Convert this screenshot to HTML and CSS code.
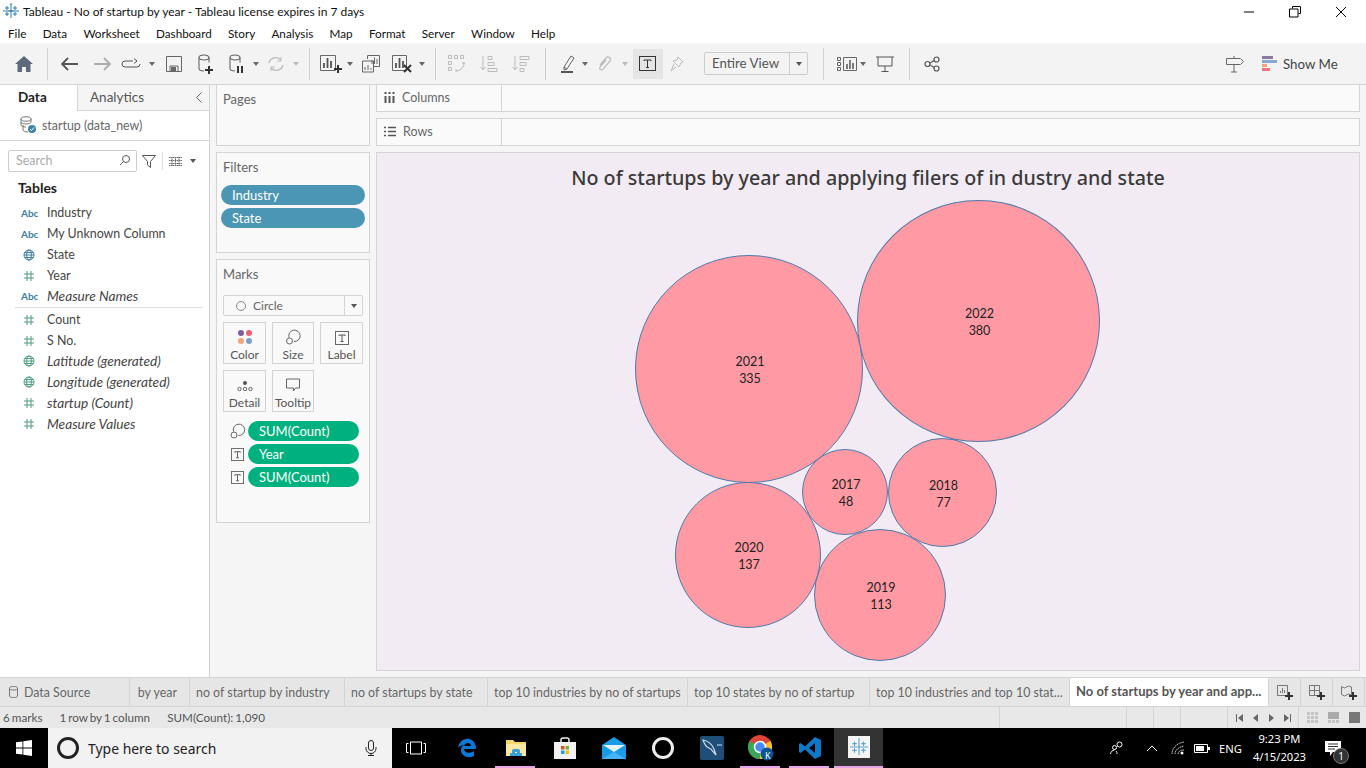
FILE: index.html
```html
<!doctype html>
<html lang="en">
  <head>
    <meta charset="UTF-8" />
    <meta name="viewport" content="width=device-width, initial-scale=1.0" />
    <title>Tableau - No of startup by year</title>
    <link rel="stylesheet" href="styles.css">
  </head>
  <body>
    <!-- shared icons -->
    <svg class="defs" width="0" height="0">
      <symbol id="i-hash" viewBox="0 0 12 12"><path d="M4 1v10M8 1v10M1 4h10M1 8h10" fill="none" stroke="#4f9e80" stroke-width="1"/></symbol>
      <symbol id="i-globe" viewBox="0 0 12 12"><g fill="none" stroke="currentColor" stroke-width="1"><circle cx="6" cy="6" r="5"/><ellipse cx="6" cy="6" rx="2.3" ry="5"/><path d="M1 6h10M1.7 3.500h8.600M1.7 8.500h8.600"/></g></symbol>
      <symbol id="i-size" viewBox="0 0 16 16"><g fill="none" stroke="#666" stroke-width="1"><path d="M4 8.500A5.700 5.700 0 1 1 9 12.500"/><circle cx="4.500" cy="12" r="3"/></g></symbol>
      <symbol id="i-label" viewBox="0 0 14 14"><rect x=".5" y=".5" width="13" height="13" fill="none" stroke="#666"/><path d="M4 5V4h6v1M7 4v6.500M5.500 10.500h3" fill="none" stroke="#555"/></symbol>
      <symbol id="i-cyl" viewBox="0 0 16 20"><g fill="none" stroke="#666" stroke-width="1.100"><ellipse cx="7" cy="3.500" rx="5" ry="2.500"/><path d="M2 3.500v11c0 1.500 2 2.500 5 2.500M12 3.500v5"/></g></symbol>
      <symbol id="i-plus" viewBox="0 0 8 8"><path d="M4 0v8M0 4h8" stroke="#333" stroke-width="2"/></symbol>
      <symbol id="i-tableau" viewBox="0 0 16 16"><path d="M8 1v14M2 8h12M5.500 8h5M4 3v4M2 5h4M12 3v4M10 5h4M4 9v4M2 11h4M12 9v4M10 11h4M8 0v2M0 8h2M14 8h2" fill="none" stroke="currentColor"/></symbol>
    </svg>

    <header class="title-bar">
      <svg class="app-icon" width="16" height="16"><use href="#i-tableau"/></svg>
      <span class="title-text">Tableau - No of startup by year - Tableau license expires in 7 days</span>
      <div class="win-buttons">
        <svg width="12" height="12" viewBox="0 0 12 12"><path d="M1 6h10" stroke="#000"/></svg>
        <svg width="12" height="12" viewBox="0 0 12 12"><path d="M3.500 2.500V.5h8v7h-2M.5 3h8.500v8H.5z" fill="none" stroke="#000"/></svg>
        <svg width="12" height="12" viewBox="0 0 12 12"><path d="M1 1l10 10M11 1L1 11" stroke="#000"/></svg>
      </div>
    </header>

    <nav class="menu-bar">
      <span>File</span><span>Data</span><span>Worksheet</span><span>Dashboard</span><span>Story</span><span>Analysis</span><span>Map</span><span>Format</span><span>Server</span><span>Window</span><span>Help</span>
    </nav>

    <div class="toolbar">
      <svg width="18" height="16" viewBox="0 0 18 16"><path d="M9 0L0 8h2.500v8H7v-5h4v5h4.500V8H18z" fill="#5b6b7c"/></svg>
      <i class="tb-sep"></i>
      <svg width="18" height="14" viewBox="0 0 18 14"><path d="M7 1L1 7l6 6M1 7h16" fill="none" stroke="#555" stroke-width="1.800"/></svg>
      <svg width="18" height="14" viewBox="0 0 18 14"><path d="M11 1l6 6-6 6M17 7H1" fill="none" stroke="#aaa" stroke-width="1.800"/></svg>
      <svg width="20" height="12" viewBox="0 0 20 12"><path d="M12 3H4a3 3 0 0 0 0 6h12a3 3 0 0 0 3-3M13 .5L16 3l-3 2.500" fill="none" stroke="#555"/></svg>
      <i class="caret"></i>
      <svg width="16" height="16" viewBox="0 0 16 16"><path d="M.5.5h15v15H.5zM4 15.500V10h8v5.500" fill="none" stroke="#666"/><path d="M5 11h5v4H5z" fill="#666"/></svg>
      <svg width="16" height="20" viewBox="0 0 16 20"><use href="#i-cyl"/><use href="#i-plus" x="8" y="12" width="8" height="8"/></svg>
      <svg width="16" height="20" viewBox="0 0 16 20"><use href="#i-cyl"/><path d="M10 12v7M14 12v7" stroke="#333" stroke-width="2"/></svg>
      <i class="caret"></i>
      <svg width="18" height="16" viewBox="0 0 18 16"><path d="M2 7a7 7 0 0 1 12-3M16 9a7 7 0 0 1-12 3" fill="none" stroke="#bbb" stroke-width="1.400"/><path d="M14 1v4h-4M4 15v-4h4" fill="none" stroke="#bbb"/></svg>
      <i class="caret caret-off"></i>
      <i class="tb-sep"></i>
      <svg width="22" height="18" viewBox="0 0 22 18"><path d="M.5.5h15v15H.5z" fill="none" stroke="#666"/><path d="M4 13V8M7.500 13V3M11 13V6" stroke="#555" stroke-width="1.800"/><use href="#i-plus" x="14" y="10" width="8" height="8"/></svg>
      <i class="caret"></i>
      <svg width="18" height="18" viewBox="0 0 18 18"><path d="M5.500 4V.5h12v11H12M.5 6h11v11H.5z" fill="#f3f3f3" stroke="#666"/><path d="M10 9V5M12.500 9V2.500M15 9V4M3 15v-3M6 15v-5M9 15v-2" stroke="#666"/></svg>
      <svg width="20" height="18" viewBox="0 0 20 18"><path d="M.5.5h14v15H.5z" fill="none" stroke="#666"/><path d="M4 13V8M7.500 13V3M11 13V6" stroke="#555" stroke-width="1.800"/><path d="M12 10l7 7M19 10l-7 7" stroke="#333" stroke-width="2"/></svg>
      <i class="caret"></i>
      <i class="tb-sep"></i>
      <svg width="18" height="18" viewBox="0 0 18 18"><g fill="none" stroke="#bbb"><path d="M.5.5h3v3h-3zM6.500.5h3v3h-3zM12.500.5h3v3h-3zM.5 6.500h3v3h-3zM.5 12.500h3v3h-3z"/><path d="M16 7a8 8 0 0 1-8 9M8 14l0 3M14 8l3 0"/></g></svg>
      <svg width="18" height="16" viewBox="0 0 18 16"><path d="M3 0v14M.5 11L3 14l2.500-3" fill="none" stroke="#bbb"/><path d="M8 .5h4v3H8zM8 6.500h6v3H8zM8 12.500h9v3H8z" fill="none" stroke="#bbb"/></svg>
      <svg width="18" height="16" viewBox="0 0 18 16"><path d="M3 0v14M.5 11L3 14l2.500-3" fill="none" stroke="#bbb"/><path d="M8 .5h9v3H8zM8 6.500h6v3H8zM8 12.500h4v3H8z" fill="none" stroke="#bbb"/></svg>
      <i class="tb-sep"></i>
      <svg width="14" height="18" viewBox="0 0 14 18"><path d="M3 12L10 1l3 2-7 11-3 1zM3 12l3 2" fill="none" stroke="#666"/><path d="M0 17h12" stroke="#555" stroke-width="2"/></svg>
      <i class="caret"></i>
      <svg width="14" height="16" viewBox="0 0 14 16"><path d="M2 9l6-7a2.500 2.500 0 0 1 4 3l-7 8a1.500 1.500 0 0 1-3-2l6-7" fill="none" stroke="#bbb" stroke-width="1.200"/></svg>
      <i class="caret caret-off"></i>
      <div class="tb-active"><svg width="18" height="16" viewBox="0 0 18 16"><rect x=".5" y=".5" width="16" height="14" fill="none" stroke="#333"/><path d="M5 5V4h7v1M8.500 4v7.500M7 11.500h3" fill="none" stroke="#333"/></svg></div>
      <svg width="14" height="16" viewBox="0 0 14 16"><path d="M8 1l5 5-2 1-2 4-6-6 4-1zM4 8l-3 7 5-4" fill="none" stroke="#bbb"/></svg>
      <div class="fit-select"><span class="fit-text">Entire View</span><span class="fit-arrow"><i class="caret caret-dark"></i></span></div>
      <i class="tb-sep"></i>
      <svg width="20" height="14" viewBox="0 0 20 14"><path d="M.5.5h3v3h-3zM.5 5.500h3v3h-3zM.5 10.500h3v3h-3zM6.500.5h13v13h-13z" fill="none" stroke="#666"/><path d="M10 12V7M13 12V3M16 12V6" stroke="#555" stroke-width="1.500"/></svg>
      <i class="caret"></i>
      <svg width="18" height="16" viewBox="0 0 18 16"><path d="M0 1h18M2 1v9h14V1M9 10v5M5.500 15.500h7" fill="none" stroke="#555"/></svg>
      <i class="tb-sep"></i>
      <svg width="16" height="16" viewBox="0 0 16 16"><g fill="none" stroke="#555" stroke-width="1.200"><circle cx="3.500" cy="8" r="2.500"/><circle cx="12.500" cy="3.500" r="2.500"/><circle cx="12.500" cy="12.500" r="2.500"/><path d="M5.800 7l4.500-2.500M5.800 9l4.500 2.500"/></g></svg>
      <div class="tb-fill"></div>
      <svg width="18" height="18" viewBox="0 0 18 18"><path d="M.5 3.500h14l3 3-3 3H.5zM8 3.500V1M8 9.500V17M5 17h6" fill="none" stroke="#666"/></svg>
      <div class="show-me">
        <svg width="15" height="15" viewBox="0 0 15 15"><path d="M0 0h11v3H0z" fill="#8a7a9e"/><path d="M0 4h15v3H0z" fill="#86a9cf"/><path d="M0 8h5v3H0z" fill="#f3a37a"/><path d="M0 12h8v3H0z" fill="#f0727e"/></svg>
        <span>Show Me</span>
      </div>
    </div>

    <main class="workspace">
      <aside class="data-pane">
        <div class="pane-tabs">
          <div class="pane-tab pane-tab-on">Data</div>
          <div class="pane-tab">Analytics
            <svg class="collapse" width="6" height="11" viewBox="0 0 6 11"><path d="M5.500.5l-5 5 5 5" fill="none" stroke="#666"/></svg>
          </div>
        </div>
        <div class="source-row">
          <svg width="18" height="18" viewBox="0 0 18 18"><g fill="none" stroke="#777"><ellipse cx="7" cy="3" rx="5" ry="2.200"/><path d="M2 3v3c0 1 2 2 5 2s5-1 5-2V3M2 6v3c0 1 2 2 5 2M4 9v5c0 1 2 2 5 2"/></g><circle cx="13" cy="13" r="4" fill="#3b86ad"/><path d="M11 13l1.500 1.500 2.500-3" fill="none" stroke="#fff"/></svg>
          <span>startup (data_new)</span>
        </div>
        <div class="search-row">
          <div class="search-box">
            <span>Search</span>
            <svg width="12" height="12" viewBox="0 0 12 12"><circle cx="7" cy="5" r="3.500" fill="none" stroke="#555"/><path d="M4.500 7.500L1 11" stroke="#555"/></svg>
          </div>
          <svg class="filter-icon" width="14" height="13" viewBox="0 0 14 13"><path d="M.5.5h13L8.500 6.500V12.500L5.500 10V6.500z" fill="none" stroke="#555"/></svg>
          <i class="search-sep"></i>
          <svg width="13" height="9" viewBox="0 0 13 9"><path d="M0 .5h13M0 3.500h13M0 6.500h13M0 8.500h13M3 0v9M6.500 0v9M10 0v9" stroke="#666" stroke-dasharray="1.500 .5"/></svg>
          <i class="caret caret-dark"></i>
        </div>
        <h3 class="tables-head">Tables</h3>
        <ul class="fields">
          <li><b class="abc">Abc</b>Industry</li>
          <li><b class="abc">Abc</b>My Unknown Column</li>
          <li><svg class="globe-blue" width="12" height="12"><use href="#i-globe"/></svg>State</li>
          <li><svg width="12" height="12"><use href="#i-hash"/></svg>Year</li>
          <li class="calc"><b class="abc">Abc</b>Measure Names</li>
        </ul>
        <ul class="fields fields-measures">
          <li><svg width="12" height="12"><use href="#i-hash"/></svg>Count</li>
          <li><svg width="12" height="12"><use href="#i-hash"/></svg>S No.</li>
          <li class="calc"><svg class="globe-green" width="12" height="12"><use href="#i-globe"/></svg>Latitude (generated)</li>
          <li class="calc"><svg class="globe-green" width="12" height="12"><use href="#i-globe"/></svg>Longitude (generated)</li>
          <li class="calc"><svg width="12" height="12"><use href="#i-hash"/></svg>startup (Count)</li>
          <li class="calc"><svg width="12" height="12"><use href="#i-hash"/></svg>Measure Values</li>
        </ul>
      </aside>

      <section class="cards">
        <div class="card card-pages"><div class="card-head">Pages</div></div>
        <div class="card card-filters">
          <div class="card-head">Filters</div>
          <div class="pill pill-blue">Industry</div>
          <div class="pill pill-blue">State</div>
        </div>
        <div class="card card-marks">
          <div class="card-head">Marks</div>
          <div class="mark-type">
            <span class="mark-type-name"><i class="ring"></i>Circle</span>
            <span class="mark-type-arrow"><i class="caret caret-dark"></i></span>
          </div>
          <div class="mark-grid">
            <div class="mark-btn">
              <svg width="16" height="16" viewBox="0 0 16 16"><circle cx="4" cy="4" r="3" fill="#7d5f93"/><circle cx="12" cy="4" r="3" fill="#ef5f78"/><circle cx="4" cy="12" r="3" fill="#f3a37a"/><circle cx="12" cy="12" r="3" fill="#7d9fce"/></svg>
              <span>Color</span>
            </div>
            <div class="mark-btn"><svg width="16" height="16"><use href="#i-size"/></svg><span>Size</span></div>
            <div class="mark-btn"><svg width="14" height="14"><use href="#i-label"/></svg><span>Label</span></div>
            <div class="mark-btn">
              <svg width="16" height="16" viewBox="0 0 16 16"><circle cx="8" cy="6" r="2" fill="#555"/><g fill="none" stroke="#666"><circle cx="2.500" cy="12" r="1.700"/><circle cx="8" cy="12" r="1.700"/><circle cx="13.500" cy="12" r="1.700"/></g></svg>
              <span>Detail</span>
            </div>
            <div class="mark-btn">
              <svg width="16" height="16" viewBox="0 0 16 16"><path d="M1.500 2h13v9h-4l-2 3v-3h-7z" fill="none" stroke="#666"/></svg>
              <span>Tooltip</span>
            </div>
          </div>
          <div class="enc-row"><svg width="16" height="16"><use href="#i-size"/></svg><div class="pill pill-green">SUM(Count)</div></div>
          <div class="enc-row"><svg width="13" height="13"><use href="#i-label"/></svg><div class="pill pill-green">Year</div></div>
          <div class="enc-row"><svg width="13" height="13"><use href="#i-label"/></svg><div class="pill pill-green">SUM(Count)</div></div>
        </div>
      </section>

      <section class="viz-side">
        <div class="shelf">
          <div class="shelf-label">
            <svg width="11" height="11" viewBox="0 0 11 11"><path d="M1.500 0v2M5.500 0v2M9.500 0v2M1.500 4v7M5.500 4v7M9.500 4v7" stroke="#555" stroke-width="2"/></svg>
            Columns
          </div>
        </div>
        <div class="shelf">
          <div class="shelf-label">
            <svg width="12" height="11" viewBox="0 0 12 11"><path d="M0 1.500h2M4 1.500h8M0 5.500h2M4 5.500h8M0 9.500h2M4 9.500h8" stroke="#555" stroke-width="1.600"/></svg>
            Rows
          </div>
        </div>
        <div class="viz">
          <h2 class="viz-title">No of startups by year and applying filers of in dustry and state</h2>
          <!-- bubble positions are the chart data -->
          <div class="bubble b-2022"><span>2022</span><span>380</span></div>
          <div class="bubble b-2021"><span>2021</span><span>335</span></div>
          <div class="bubble b-2020"><span>2020</span><span>137</span></div>
          <div class="bubble b-2019"><span>2019</span><span>113</span></div>
          <div class="bubble b-2018"><span>2018</span><span>77</span></div>
          <div class="bubble b-2017"><span>2017</span><span>48</span></div>
        </div>
      </section>
    </main>

    <div class="tab-bar">
      <div class="tab tab-source">
        <svg width="9" height="12" viewBox="0 0 9 12"><path d="M.5 2v8c0 1 1 1.500 4 1.500s4-.5 4-1.500V2c0-1-1-1.500-4-1.500S.5 1 .5 2zM.5 2.500c0 1 1.500 1.500 4 1.500s4-.5 4-1.500" fill="none" stroke="#777"/></svg>
        Data Source
      </div>
      <div class="tab tab-cut">by year</div>
      <div class="tab tab-a">no of startup by industry</div>
      <div class="tab tab-b">no of startups by state</div>
      <div class="tab tab-c">top 10 industries by no of startups</div>
      <div class="tab tab-d">top 10 states by no of startup</div>
      <div class="tab tab-e">top 10 industries and top 10 stat...</div>
      <div class="tab tab-on">No of startups by year and app...</div>
      <div class="tab tab-add">
        <svg width="16" height="15" viewBox="0 0 16 15"><path d="M.5.5h10v10H.5z" fill="none" stroke="#777"/><path d="M3.500 8V6M5.500 8V3M7.500 8V5" stroke="#777"/><use href="#i-plus" x="8" y="7" width="8" height="8"/></svg>
      </div>
      <div class="tab tab-add">
        <svg width="16" height="15" viewBox="0 0 16 15"><path d="M.5.500h10v10H.5zM.5 5.500h10M5.500.5v10" fill="none" stroke="#777"/><use href="#i-plus" x="8" y="7" width="8" height="8"/></svg>
      </div>
      <div class="tab tab-add">
        <svg width="16" height="15" viewBox="0 0 16 15"><path d="M.5 1.500l3 1.500 4-2 3 1v8l-3-1-4 2-3-1.500z" fill="none" stroke="#777"/><use href="#i-plus" x="8" y="7" width="8" height="8"/></svg>
      </div>
    </div>

    <footer class="status-bar">
      <div class="status-info"><span>6 marks</span><span>1 row by 1 column</span><span>SUM(Count): 1,090</span></div>
      <div class="status-cell status-w1"></div>
      <div class="status-cell status-w2"></div>
      <div class="status-cell status-w2"></div>
      <div class="status-cell status-w3"></div>
      <div class="status-cell status-nav">
        <svg width="55" height="8" viewBox="0 0 55 8"><path d="M.5 0v8M54.500 0v8" stroke="#666"/><path d="M7 0L2 4l5 4zM22 0l-5 4 5 4zM33 0l5 4-5 4zM48 0l5 4-5 4z" fill="#666"/></svg>
      </div>
      <div class="status-views">
        <svg width="11" height="11" viewBox="0 0 11 11"><path d="M0 0h3v3H0zM4 0h3v3H4zM8 0h3v3H8zM0 4h3v3H0zM4 4h3v3H4zM8 4h3v3H8zM0 8h3v3H0zM4 8h3v3H4zM8 8h3v3H8z" fill="#c4c4c4"/></svg>
        <svg width="11" height="11" viewBox="0 0 11 11"><path d="M0 0h11v7H0z" fill="#aaa"/><path d="M0 8h3v3H0zM4 8h3v3H4zM8 8h3v3H8z" fill="#c4c4c4"/></svg>
        <svg width="11" height="11" viewBox="0 0 11 11"><path d="M0 0h11v11H0z" fill="#777"/></svg>
      </div>
    </footer>

    <div class="taskbar">
      <div class="start">
        <svg width="16" height="16" viewBox="0 0 16 16"><path d="M0 2.300l6.500-.9v6.200H0zM7.300 1.300L16 0v7.600H7.300zM0 8.400h6.500v6.200L0 13.700zM7.300 8.400H16V16l-8.700-1.300z" fill="#fff"/></svg>
      </div>
      <div class="task-search">
        <i class="cortana"></i>
        <span>Type here to search</span>
        <svg class="mic" width="12" height="16" viewBox="0 0 12 16"><rect x="3.500" y=".5" width="5" height="10" rx="2.500" fill="none" stroke="#222"/><path d="M1 7v1.500a5 5 0 0 0 10 0V7M6 13.500V15.500M3 15.500h6" fill="none" stroke="#222"/></svg>
      </div>
      <div class="task-app task-view">
        <svg width="20" height="14" viewBox="0 0 20 14"><path d="M4.500 1h11v12h-11zM2.500 2.500H.5v9h2M17.500 2.500h2v9h-2" fill="none" stroke="#fff"/></svg>
      </div>
      <div class="task-app">
        <svg width="20" height="20" viewBox="0 0 20 20"><path d="M1 10C2 3 8 0 12 1c5 1 7 5 7 10H7c0 4 6 5 10 2v5c-6 3-13 0-13-6 0-2 1-4 3-5-2 0-5 1-6 3zM7 8h7c0-4-6-4-7 0z" fill="#0a78d7"/></svg>
      </div>
      <div class="task-app task-open">
        <svg width="22" height="18" viewBox="0 0 22 18"><path d="M1 1h7l2 2h11v14H1z" fill="#f5d76e"/><path d="M1 5h20v12H1z" fill="#fbe9a5"/><path d="M7 17v-5a2 2 0 0 1 2-2h4a2 2 0 0 1 2 2v5h-3v-4h-2v4z" fill="#3aa0d8"/><path d="M5 14h12v3H5z" fill="#3aa0d8"/></svg>
      </div>
      <div class="task-app">
        <svg width="22" height="22" viewBox="0 0 22 22"><path d="M7 6V3a2 2 0 0 1 2-2h4a2 2 0 0 1 2 2v3" fill="none" stroke="#eee" stroke-width="1.500"/><path d="M0 5h22v17H0z" fill="#f2f2f2"/><path d="M7 9h3.500v3.500H7z" fill="#e84c2b"/><path d="M11.500 9H15v3.500h-3.500z" fill="#6fb52c"/><path d="M7 13.500h3.500V17H7z" fill="#1ba1e2"/><path d="M11.500 13.500H15V17h-3.500z" fill="#fbb900"/></svg>
      </div>
      <div class="task-app">
        <svg width="24" height="22" viewBox="0 0 24 22"><path d="M0 8L12 0l12 8v14H0z" fill="#1a9be8"/><path d="M1 8h22l-11 7z" fill="#e8f4fc"/><path d="M0 22l12-7 12 7z" fill="#45b4f2"/></svg>
      </div>
      <div class="task-app"><i class="obs-ring"></i></div>
      <div class="task-app">
        <svg width="24" height="24" viewBox="0 0 24 24"><rect width="24" height="24" rx="2" fill="#1f4f78"/><path d="M3 4c5 1 9 4 11 9l2 6c-3-3-4-6-7-7-3-1-5-5-6-8zM17 9h5" fill="none" stroke="#cfdde8" stroke-width="1.200"/></svg>
      </div>
      <div class="task-app task-open">
        <svg width="26" height="26" viewBox="0 0 26 26"><circle cx="12" cy="12" r="12" fill="#de4437"/><path d="M12 12L22.400 6A12 12 0 0 1 12 24z" fill="#fbc02d"/><path d="M12 12L12 24A12 12 0 0 1 1.600 6z" fill="#3aa657"/><circle cx="12" cy="12" r="5.500" fill="#4a8af4" stroke="#fff" stroke-width="1.500"/><circle cx="19" cy="19" r="6.500" fill="#0b5394"/></svg>
        <b class="profile-k">K</b>
      </div>
      <div class="task-app task-open">
        <svg width="24" height="24" viewBox="0 0 24 24"><path d="M17 1l6 3v16l-6 3L7 13.500 2.500 17 1 16v-8l1.500-1L7 10.500zM17 7l-6 5 6 5z" fill="#0e79c9"/></svg>
      </div>
      <div class="task-app task-current">
        <div class="tableau-tile"><svg width="18" height="18"><use href="#i-tableau"/></svg></div>
      </div>
      <div class="tray">
        <svg class="tray-people" width="14" height="14" viewBox="0 0 14 14"><g fill="none" stroke="#fff"><circle cx="9.500" cy="3.500" r="2.500"/><circle cx="4.500" cy="6.500" r="2"/><path d="M.5 13c0-2 2-4 4-4M7 13c0-1 0-2-1-3"/></g></svg>
        <svg class="tray-up" width="12" height="7" viewBox="0 0 12 7"><path d="M1 6l5-5 5 5" fill="none" stroke="#fff"/></svg>
        <svg class="tray-wifi" width="14" height="14" viewBox="0 0 14 14"><path d="M1 13C1 7 6 2 13 1M4 13c0-4 4-7 9-8M7 13c0-2 2-4 6-4" fill="none" stroke="#ccc" stroke-dasharray="1.500 .6"/><circle cx="11" cy="12" r="1.500" fill="#fff"/></svg>
        <svg class="tray-bat" width="16" height="9" viewBox="0 0 16 9"><path d="M.5.5h13v8H.5z" fill="none" stroke="#fff"/><path d="M2 2h8v5H2zM14 3h2v3h-2z" fill="#fff"/></svg>
        <span class="tray-lang">ENG</span>
        <div class="tray-clock"><span>9:23 PM</span><span>4/15/2023</span></div>
        <div class="tray-note">
          <svg width="16" height="15" viewBox="0 0 16 15"><path d="M0 0h16v11H8l-3 4v-4H0z" fill="#fff"/><path d="M3 3h10M3 5.500h10M3 8h7" stroke="#333"/></svg>
          <b class="note-count">1</b>
        </div>
      </div>
    </div>
  </body>
</html>
```

FILE: styles.css
```css
* {
  box-sizing: border-box;
}
html,
body {
  margin: 0;
  height: 768px;
  overflow: hidden;
}
body {
  display: flex;
  flex-direction: column;
  font-family: "Lato", "Liberation Sans", sans-serif;
  font-size: 12.400px;
  color: #444;
  background: #f5f5f5;
}
.defs {
  position: absolute;
}
svg {
  display: block;
  flex: none;
}
ul {
  list-style: none;
  margin: 0;
  padding: 0;
}

/* window chrome */
.title-bar {
  height: 22px;
  flex: none;
  display: flex;
  align-items: center;
  padding-left: 3px;
  background: #fff;
  font-size: 12px;
  color: #111;
}
.app-icon {
  color: #2f7fa8;
}
.title-text {
  margin-left: 4px;
}
.win-buttons {
  margin-left: auto;
  display: flex;
  gap: 34px;
  padding-right: 19px;
  margin-top: 2px;
}
.menu-bar {
  height: 21px;
  flex: none;
  display: flex;
  gap: 16.300px;
  padding: 0 0 0 8px;
  align-items: center;
  background: #fff;
  font-size: 11.700px;
  color: #111;
}

/* toolbar: one grid column per button, tuned to the app spacing */
.toolbar {
  height: 41px;
  flex: none;
  display: grid;
  grid-template-columns: 30px 16px 30px 34px 24px 18px 26px 36px 26px 14px 26px 14px 12px 32px 6px 36px 26px 14px 12px 32px 32px 32px 16px 30px 4px 36px 4px 42px 16px 123px 30px 18px 14px 30px 18px 28px 1fr 30px 116px;
  justify-items: center;
  align-items: center;
  padding-left: 9px;
  background: #f3f3f3;
}
.tb-sep {
  width: 1px;
  height: 32px;
  background: #cfcfcf;
}
.tb-fill {
  height: 1px;
}
.caret {
  display: block;
  flex: none;
  width: 0;
  height: 0;
  border-left: 3.500px solid transparent;
  border-right: 3.500px solid transparent;
  border-top: 4px solid #666;
}
.caret-off {
  border-top-color: #bbb;
}
.caret-dark {
  border-top-color: #555;
}
.tb-active {
  width: 30px;
  height: 30px;
  display: flex;
  align-items: center;
  justify-content: center;
  background: #e4e4e4;
}
.fit-select {
  justify-self: end;
  width: 104px;
  height: 23px;
  display: flex;
  border: 1px solid #ccc;
  border-radius: 2px;
  color: #555;
  font-size: 13.300px;
}
.fit-text {
  flex: 1;
  padding-left: 7px;
  line-height: 20px;
}
.fit-arrow {
  width: 18px;
  border-left: 1px solid #ccc;
  display: flex;
  align-items: center;
  justify-content: center;
}
.show-me {
  justify-self: start;
  display: flex;
  align-items: center;
  gap: 6px;
  padding-left: 12px;
  font-size: 13.300px;
  color: #444;
}

/* main area */
.workspace {
  height: 593px;
  flex: none;
  display: grid;
  grid-template-columns: 210px 154px 984px;
  column-gap: 6px;
  border-top: 1px solid #d4d4d4;
}

/* data pane */
.data-pane {
  background: #fff;
  border-right: 1px solid #d4d4d4;
}
.pane-tabs {
  display: flex;
  height: 26px;
}
.pane-tab {
  position: relative;
  flex: 1;
  padding-left: 12px;
  line-height: 24px;
  font-size: 13.500px;
  background: #f5f5f5;
  border-bottom: 1px solid #d4d4d4;
  color: #555;
}
.pane-tab-on {
  flex: none;
  width: 78px;
  padding-left: 18px;
  background: #fff;
  border-bottom: 0;
  border-right: 1px solid #d4d4d4;
  font-weight: 700;
  color: #222;
}
.collapse {
  position: absolute;
  right: 7px;
  top: 7px;
}
.source-row {
  height: 30px;
  display: flex;
  align-items: center;
  gap: 5px;
  padding: 0 0 1px 19px;
  border-bottom: 1px solid #d4d4d4;
  color: #666;
}
.search-row {
  display: flex;
  align-items: center;
  margin-top: 9px;
  padding-left: 8px;
}
.search-box {
  width: 129px;
  height: 22px;
  display: flex;
  align-items: center;
  justify-content: space-between;
  padding: 0 5px 2px 7px;
  border: 1px solid #ccc;
  border-radius: 2px;
  color: #aaa;
}
.filter-icon {
  margin-left: 5px;
}
.search-sep {
  width: 1px;
  height: 18px;
  margin: 0 6px;
  background: #ddd;
}
.search-row .caret {
  margin-left: 8px;
}
.tables-head {
  margin: 7px 0 0 18px;
  font-size: 14px;
  line-height: 18px;
  font-weight: 700;
  color: #222;
}
.fields {
  margin-top: 5px;
  padding: 0 6px 0 15px;
}
.fields-measures {
  margin-top: 0;
  padding-top: 1px;
}
.fields li {
  height: 21px;
  display: flex;
  align-items: center;
  color: #444;
}
.fields:not(.fields-measures)::after {
  content: "";
  display: block;
  height: 1px;
  background: #ddd;
}
.fields li > svg {
  margin: 0 12px 0 8px;
}
.fields .calc {
  padding-bottom: 2px;
  font-style: italic;
  font-size: 13.700px;
}
.abc {
  width: 32px;
  padding-left: 6px;
  font-size: 10px;
  font-style: normal;
  font-weight: 700;
  color: #3f7d9e;
}
.globe-blue {
  color: #3f7d9e;
}
.globe-green {
  color: #4f9e80;
}

/* shelves and cards */
.cards {
  display: flex;
  flex-direction: column;
  gap: 6px;
  margin-top: -1px;
}
.card {
  padding: 0 6px;
  background: #f9f9f9;
  border: 1px solid #d4d4d4;
}
.card-head {
  padding-top: 6px;
  line-height: 16px;
  font-size: 13px;
  color: #666;
}
.card-pages {
  height: 62px;
}
.card-filters {
  height: 101px;
}
.card-marks {
  height: 264px;
}
.pill {
  height: 20px;
  border-radius: 10px;
  padding-left: 11px;
  line-height: 21px;
  font-size: 13px;
  color: #fff;
}
.pill-blue {
  margin: 3px -2px 0 -2px;
  background: #4a96b4;
}
.card-filters .card-head {
  margin-bottom: 10px;
}
.pill-green {
  flex: 1;
  background: #00b180;
}
.mark-type {
  display: flex;
  height: 21px;
  margin-top: 13px;
  border: 1px solid #d4d4d4;
  border-radius: 2px;
  font-size: 12px;
  color: #666;
}
.mark-type-name {
  flex: 1;
  display: flex;
  align-items: center;
  gap: 7px;
  padding-left: 12px;
}
.ring {
  width: 10px;
  height: 10px;
  border: 1px solid #888;
  border-radius: 50%;
}
.mark-type-arrow {
  width: 18px;
  display: flex;
  align-items: center;
  justify-content: center;
  border-left: 1px solid #d4d4d4;
}
.mark-grid {
  display: grid;
  grid-template-columns: 43px 42px 43px;
  grid-auto-rows: 42px;
  column-gap: 6px;
  row-gap: 6px;
  margin: 6px 0 9px;
}
.mark-btn {
  display: flex;
  flex-direction: column;
  align-items: center;
  justify-content: flex-end;
  gap: 2px;
  padding-bottom: 1px;
  border: 1px solid #d4d4d4;
  font-size: 12px;
  color: #555;
}
.enc-row {
  display: flex;
  align-items: center;
  height: 20px;
  margin: 0 4px 3px 0;
}
.enc-row > svg {
  margin-left: 6px;
  width: 17px;
}
.enc-row > svg + .pill {
  margin-left: 2px;
}

/* view */
.viz-side {
  display: flex;
  flex-direction: column;
  gap: 6px;
  margin-top: -1px;
}
.shelf {
  height: 28px;
  flex: none;
  background: #fafafa;
  border: 1px solid #d4d4d4;
}
.shelf-label {
  width: 125px;
  height: 100%;
  display: flex;
  align-items: center;
  gap: 7px;
  padding: 0 0 2px 7px;
  border-right: 1px solid #d4d4d4;
  color: #666;
  font-size: 12.500px;
}
.viz {
  position: relative;
  height: 519px;
  background: #f2ebf3;
  border: 1px solid #d4d4d4;
}
.viz-title {
  margin: 13px 0 0;
  text-align: center;
  font-family: "Noto Sans", sans-serif;
  font-size: 19.700px;
  line-height: 24px;
  font-weight: 500;
  color: #3a3a3a;
}
.bubble {
  position: absolute;
  display: flex;
  flex-direction: column;
  align-items: center;
  justify-content: center;
  padding: 2px 0 0 2px;
  border-radius: 50%;
  background: #ff9aa4;
  border: 1px solid #4f79ab;
  font-size: 12.500px;
  line-height: 17px;
  color: #222;
}
.b-2022 {
  left: 480px;
  top: 47px;
  width: 243px;
  height: 242px;
}
.b-2021 {
  left: 258px;
  top: 102px;
  width: 228px;
  height: 228px;
}
.b-2020 {
  left: 298px;
  top: 329px;
  width: 146px;
  height: 146px;
}
.b-2019 {
  left: 437px;
  top: 376px;
  width: 132px;
  height: 132px;
}
.b-2018 {
  left: 511px;
  top: 285px;
  width: 109px;
  height: 109px;
}
.b-2017 {
  left: 425px;
  top: 296px;
  width: 86px;
  height: 86px;
}

/* sheet tabs */
.tab-bar {
  height: 30px;
  flex: none;
  display: flex;
  background: #e6e6e6;
  border-top: 1px solid #d4d4d4;
  border-bottom: 1px solid #d4d4d4;
}
.tab {
  flex: none;
  height: 28px;
  display: flex;
  align-items: center;
  padding-left: 6px;
  border-right: 1px solid #d4d4d4;
  color: #666;
  white-space: nowrap;
  overflow: hidden;
}
.tab-source {
  width: 130px;
  gap: 6px;
  padding-left: 9px;
}
.tab-cut {
  width: 60px;
  justify-content: flex-end;
  padding: 0 12px 0 0;
}
.tab-a {
  width: 155px;
}
.tab-b {
  width: 143px;
}
.tab-c {
  width: 200px;
}
.tab-d {
  width: 182px;
}
.tab-e {
  width: 200px;
}
.tab-on {
  width: 199px;
  padding-bottom: 2px;
  background: #fff;
  font-size: 13px;
  font-weight: 700;
  color: #555;
}
.tab-add {
  width: 32px;
  justify-content: center;
  padding: 0;
}

/* status bar */
.status-bar {
  height: 21px;
  flex: none;
  display: flex;
  background: #e8e8e8;
  font-size: 11.700px;
  word-spacing: -1px;
  color: #555;
}
.status-info {
  width: 1000px;
  display: flex;
  align-items: center;
  gap: 17px;
  padding: 0 0 2px 3px;
  border-right: 1px solid #d4d4d4;
}
.status-cell {
  border-right: 1px solid #d4d4d4;
}
.status-w1 {
  width: 127px;
}
.status-w2 {
  width: 27px;
}
.status-w3 {
  width: 47px;
}
.status-nav {
  width: 71px;
  display: flex;
  align-items: center;
  padding-left: 8px;
}
.status-views {
  display: flex;
  align-items: center;
  gap: 10px;
  padding-left: 8px;
}

/* windows taskbar */
.taskbar {
  height: 40px;
  flex: none;
  display: flex;
  background: #000;
  color: #fff;
  font-family: "Noto Sans", sans-serif;
}
.start {
  width: 48px;
  display: flex;
  align-items: center;
  justify-content: center;
}
.task-search {
  width: 344px;
  display: flex;
  align-items: center;
  padding-left: 9px;
  background: #f2f2f2;
  color: #222;
  font-size: 13.950px;
}
.cortana {
  width: 22px;
  height: 22px;
  margin-right: 9px;
  border: 3px solid #222;
  border-radius: 50%;
}
.mic {
  margin-left: auto;
  margin-right: 15px;
}
.task-app {
  position: relative;
  width: 49px;
  display: flex;
  align-items: center;
  justify-content: center;
}
.task-view {
  width: 48px;
  margin-right: 2px;
}
.task-open::after {
  content: "";
  position: absolute;
  left: 4px;
  right: 5px;
  bottom: 0;
  height: 2px;
  background: #e6a5e6;
}
.task-current {
  background: #333;
  border-bottom: 2px solid #e6a5e6;
}
.tableau-tile {
  width: 22px;
  height: 22px;
  display: flex;
  align-items: center;
  justify-content: center;
  background: #f4f4f4;
  color: #5da4cf;
}
.obs-ring {
  width: 22px;
  height: 22px;
  border: 3px solid #eee;
  border-radius: 50%;
}
.profile-k {
  position: absolute;
  left: 29px;
  top: 21px;
  font-size: 9px;
  font-weight: 400;
}
.tray {
  flex: 1;
  display: flex;
  align-items: center;
  padding-left: 227px;
  font-size: 11.200px;
}
.tray-up {
  margin-left: 22px;
}
.tray-wifi {
  margin-left: 13px;
}
.tray-bat {
  margin-left: 9px;
}
.tray-lang {
  margin-left: 9px;
}
.tray-clock {
  display: flex;
  flex-direction: column;
  align-items: center;
  line-height: 18px;
  margin-left: 11px;
}
.tray-note {
  position: relative;
  margin-left: 19px;
}
.note-count {
  position: absolute;
  left: 8px;
  top: 7px;
  width: 16px;
  height: 16px;
  border-radius: 50%;
  background: #333;
  border: 1px solid #777;
  text-align: center;
  line-height: 14px;
  font-size: 10px;
  font-weight: 400;
}
```
